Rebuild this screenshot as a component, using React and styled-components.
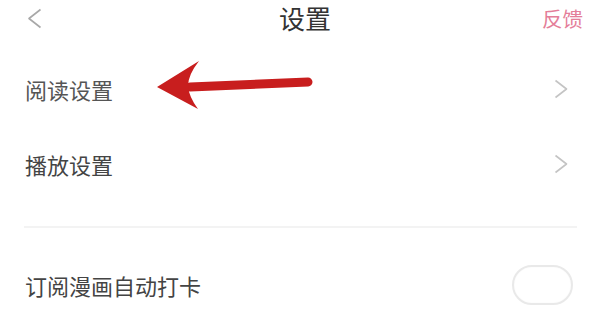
import React from "react";
import styled, { createGlobalStyle } from "styled-components";

const Global = createGlobalStyle`
  html, body { margin: 0; padding: 0; background: #fff; }
  body { font-family: "Noto Sans CJK SC", "Noto Sans", sans-serif; }
`;

const Page = styled.div`
  position: relative;
  width: 600px;
  height: 326px;
  overflow: hidden;
  background: #fff;
`;

const Header = styled.div`
  display: grid;
  grid-template-columns: 1fr auto 1fr;
  align-items: center;
  height: 36px;
  padding: 0 17px 0 27px;
`;

const Back = styled.div`
  display: flex;
  align-items: center;
`;

const Title = styled.div`
  font-size: 26px;
  line-height: 30px;
  color: #333;
`;

const Action = styled.div`
  justify-self: end;
  font-size: 20.5px;
  line-height: 24px;
  color: #e47e99;
`;

const List = styled.div`
  display: flex;
  flex-direction: column;
  padding-top: 15px;
`;

const Row = styled.div`
  display: flex;
  align-items: center;
  justify-content: space-between;
  height: ${(p) => p.$h || 75}px;
  padding: 0 32px 0 25px;
`;

const Label = styled.div`
  font-size: 22px;
  line-height: 26px;
  color: ${(p) => p.$color || "#555"};
`;

const Divider = styled.div`
  height: 2px;
  margin: 25px 23px 0 24px;
  background: #f3f3f3;
`;

const Toggle = styled.div`
  width: 57px;
  height: 36px;
  border: 2px solid #e9e9e9;
  border-radius: 20px;
  margin-right: -5px;
  box-shadow: inset 0 0 2px rgba(0, 0, 0, 0.03);
`;

const ArrowMark = styled.svg`
  position: absolute;
  left: 150px;
  top: 55px;
`;

const ChevronRight = () => (
  <svg width="14" height="20" viewBox="0 0 14 20">
    <polyline points="1.5,1.5 12.5,10 1.5,18.5" fill="none" stroke="#c4c4c4" strokeWidth="1.6" strokeLinejoin="round" />
  </svg>
);

const ChevronLeft = () => (
  <svg width="15" height="21" viewBox="0 0 15 21">
    <polyline points="13.5,1.5 2,10.5 13.5,19.5" fill="none" stroke="#a8a8a8" strokeWidth="1.6" strokeLinejoin="round" />
  </svg>
);

export default function App() {
  return (
    <>
      <Global />
      <Page>
        <Header>
          <Back>
            <ChevronLeft />
          </Back>
          <Title>设置</Title>
          <Action>反馈</Action>
        </Header>
        <List>
          <Row>
            <Label>阅读设置</Label>
            <ChevronRight />
          </Row>
          <Row>
            <Label $color="#444">播放设置</Label>
            <ChevronRight />
          </Row>
          <Divider />
          <Row $h={113}>
            <Label $color="#444">订阅漫画自动打卡</Label>
            <Toggle />
          </Row>
        </List>
        <ArrowMark width="170" height="60" viewBox="0 0 170 60">
          <line x1="40" y1="32" x2="158" y2="27" stroke="#c81e1e" strokeWidth="9" strokeLinecap="round" />
          <path d="M7 32 L49 6 Q38 20 38 31 Q39 42 48 54 Z" fill="#c81e1e" />
        </ArrowMark>
      </Page>
    </>
  );
}
